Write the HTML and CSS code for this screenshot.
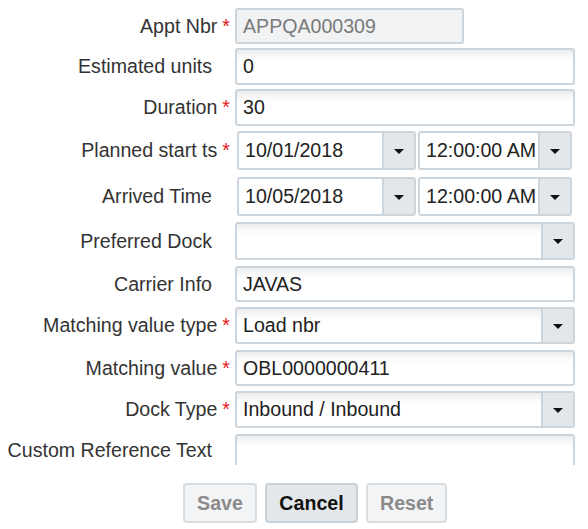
FILE: index.html
```html
<!DOCTYPE html>
<html>
<head>
<meta charset="utf-8">
<link rel="stylesheet" href="styles.css">
</head>
<body>
<div class="form">
  <div class="row h36 mb4">
    <div class="lbl req">Appt Nbr<span class="star">*</span></div>
    <div class="box txt disabled narrow">APPQA000309</div>
  </div>
  <div class="row h37 mb4">
    <div class="lbl">Estimated units</div>
    <div class="box txt">0</div>
  </div>
  <div class="row h37 mb5">
    <div class="lbl req">Duration<span class="star">*</span></div>
    <div class="box txt">30</div>
  </div>
  <div class="row h39 mb7">
    <div class="lbl req">Planned start ts<span class="star">*</span></div>
    <div class="dt">
      <div class="box pick date"><span class="val">10/01/2018</span><span class="btn"><i class="arrow"></i></span></div>
      <div class="box pick time"><span class="val">12:00:00 AM</span><span class="btn"><i class="arrow"></i></span></div>
    </div>
  </div>
  <div class="row h39 mb6">
    <div class="lbl">Arrived Time</div>
    <div class="dt">
      <div class="box pick date"><span class="val">10/05/2018</span><span class="btn"><i class="arrow"></i></span></div>
      <div class="box pick time"><span class="val">12:00:00 AM</span><span class="btn"><i class="arrow"></i></span></div>
    </div>
  </div>
  <div class="row h38 mb6">
    <div class="lbl">Preferred Dock</div>
    <div class="box pick sel"><span class="val"></span><span class="btn"><i class="arrow"></i></span></div>
  </div>
  <div class="row h36 mb5">
    <div class="lbl">Carrier Info</div>
    <div class="box txt">JAVAS</div>
  </div>
  <div class="row h37 mb6">
    <div class="lbl req">Matching value type<span class="star">*</span></div>
    <div class="box pick sel"><span class="val">Load nbr</span><span class="btn"><i class="arrow"></i></span></div>
  </div>
  <div class="row h36 mb5">
    <div class="lbl req">Matching value<span class="star">*</span></div>
    <div class="box txt">OBL0000000411</div>
  </div>
  <div class="row h37 mb6">
    <div class="lbl req">Dock Type<span class="star">*</span></div>
    <div class="box pick sel"><span class="val">Inbound / Inbound</span><span class="btn"><i class="arrow"></i></span></div>
  </div>
  <div class="row area-row">
    <div class="lbl area-lbl">Custom Reference Text</div>
    <div class="box txt area"></div>
  </div>
</div>
<div class="actions">
  <button class="b b-dis b-save">Save</button>
  <button class="b b-cancel">Cancel</button>
  <button class="b b-dis b-reset">Reset</button>
</div>
</body>
</html>
```

FILE: styles.css
```css
html, body {
  margin: 0;
  padding: 0;
  background: #fff;
}
body {
  font-family: "Liberation Sans", Arial, sans-serif;
  font-size: 19.6px;
  color: #333;
  width: 588px;
  height: 529px;
  overflow: hidden;
}
.form {
  height: 465px;
  overflow: hidden;
  padding-top: 8px;
  box-sizing: border-box;
  display: flex;
  flex-direction: column;
}
.row {
  display: flex;
  align-items: center;
  flex: none;
}
.h36 { height: 36px; }
.h37 { height: 37px; }
.h38 { height: 38px; }
.h39 { height: 39px; }
.mb4 { margin-bottom: 4px; }
.mb5 { margin-bottom: 5px; }
.mb6 { margin-bottom: 6px; }
.mb7 { margin-bottom: 7px; }

.lbl {
  width: 232px;
  box-sizing: border-box;
  text-align: right;
  padding-right: 20px;
  white-space: nowrap;
  color: #333;
  flex: none;
}
.lbl.req {
  padding-right: 2px;
}
.star {
  color: #e8171b;
  margin-left: 5px;
}
.box {
  box-sizing: border-box;
  height: 100%;
  border: 2px solid #cdd5dc;
  border-radius: 3px;
  color: #222;
  display: flex;
  align-items: center;
  white-space: nowrap;
  overflow: hidden;
}
.txt {
  margin-left: 3px;
  width: 340px;
  padding-left: 6px;
  background: linear-gradient(to bottom, #ececec 0px, #fafafa 7px, #ffffff 12px);
}
.txt.narrow {
  width: 229px;
}
.txt.disabled {
  background: #f0f2f4;
  color: #7a7a7a;
}
.dt {
  display: flex;
  height: 100%;
  margin-left: 5px;
  gap: 2px;
}
.pick {
  padding-left: 6px;
  background: #fff;
}
.pick .val {
  flex: 1;
  overflow: hidden;
}
.pick .btn {
  width: 32px;
  height: 100%;
  flex: none;
  background: #e4e7ea;
  border-left: 2px solid #cdd5dc;
  box-sizing: border-box;
  display: flex;
  align-items: center;
  justify-content: center;
}
.date { width: 179px; }
.time { width: 154px; }
.sel {
  margin-left: 3px;
  width: 340px;
  background: linear-gradient(to bottom, #ececec 0px, #fafafa 7px, #ffffff 12px);
}
.arrow {
  display: block;
  width: 0;
  height: 0;
  border-left: 5px solid transparent;
  border-right: 5px solid transparent;
  border-top: 5px solid #111;
  margin-top: 1px;
}
.area-row {
  align-items: flex-start;
  height: 60px;
}
.area-lbl {
  margin-top: 5px;
}
.box.area {
  height: 60px;
}
.actions {
  display: flex;
  gap: 8px;
  padding-left: 183px;
  margin-top: 18px;
}
.b {
  height: 40px;
  box-sizing: border-box;
  font-family: "Liberation Sans", Arial, sans-serif;
  font-size: 19.6px;
  font-weight: bold;
  border-radius: 4px;
  padding: 0 12px;
  margin: 0;
}
.b-save { width: 74px; }
.b-cancel { width: 93px; }
.b-reset { width: 81px; }
.b-dis {
  background: #f3f4f5;
  border: 2px solid #d8dde2;
  color: #8a8a8a;
}
.b-cancel {
  background: #e4e7ea;
  border: 2px solid #c8d0d7;
  color: #111;
}
```
